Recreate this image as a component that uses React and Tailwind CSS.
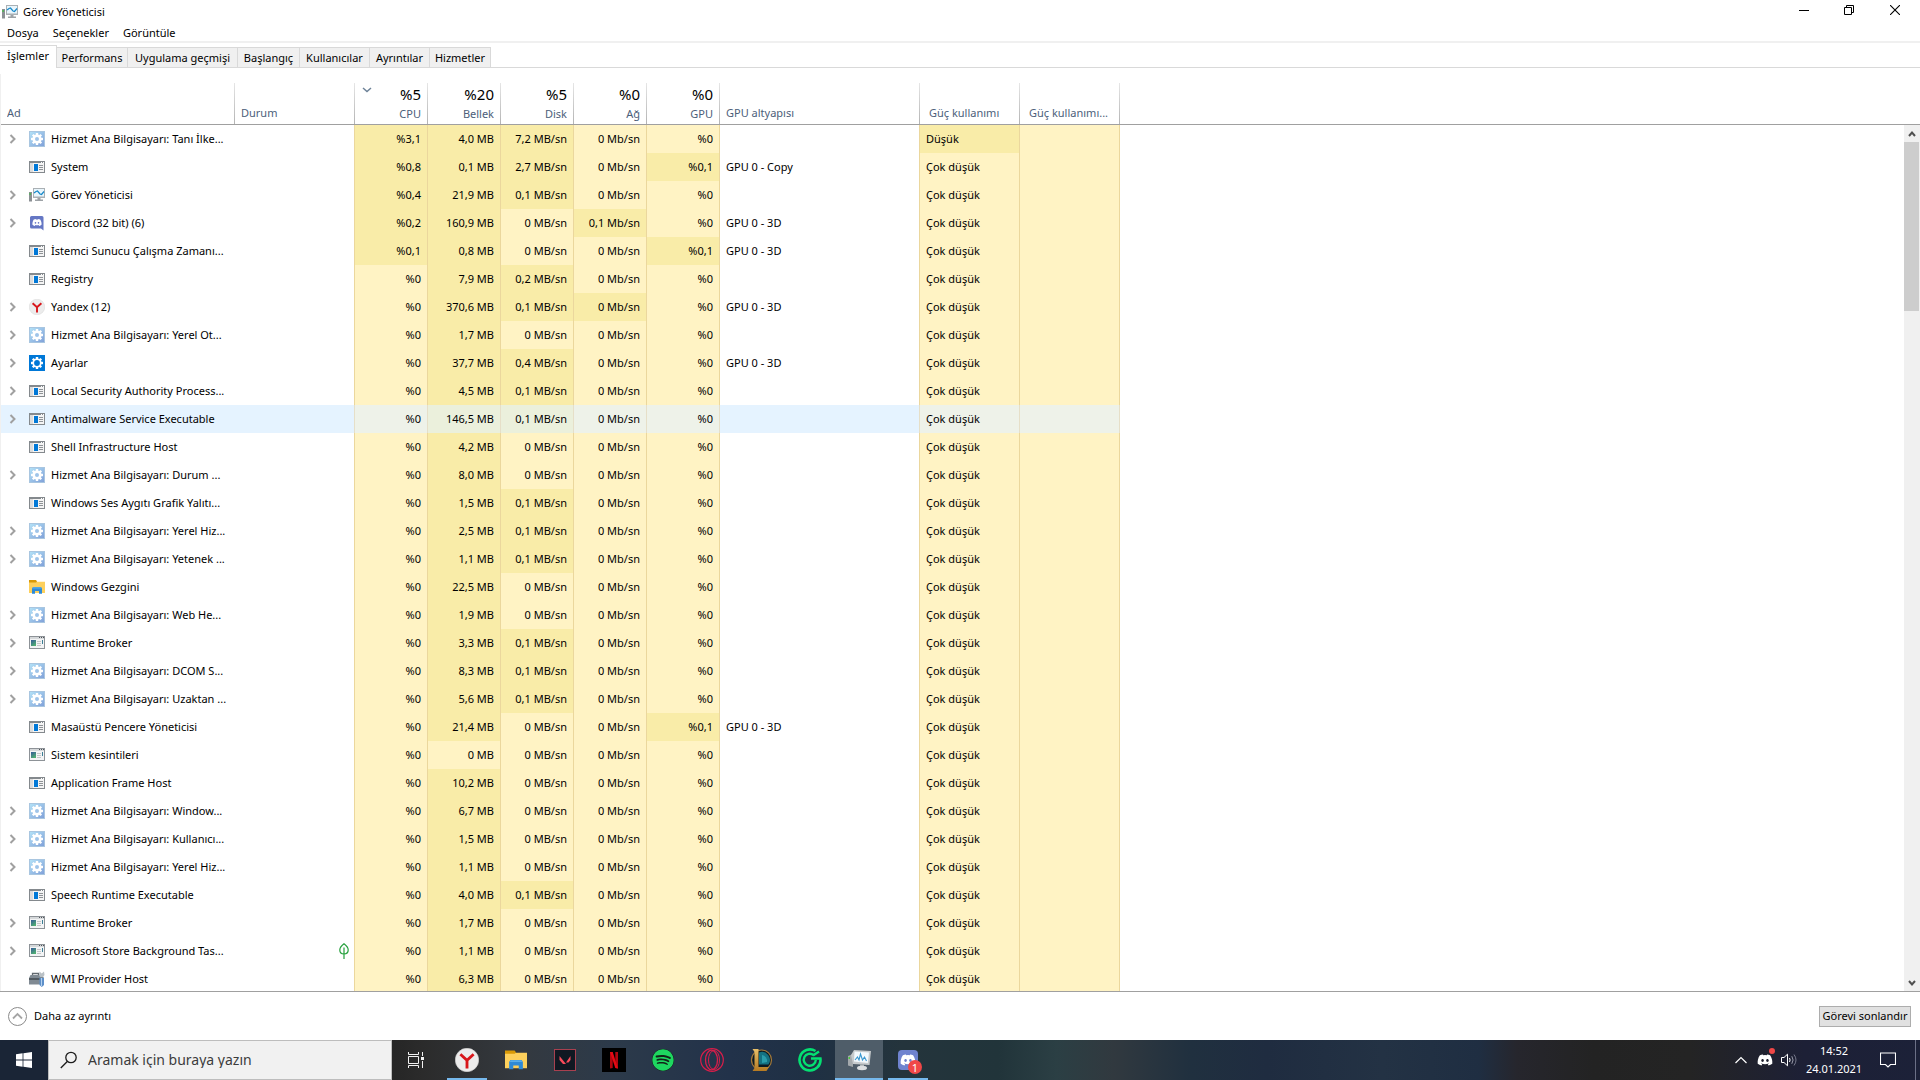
import React from "react";
import { FaDiscord, FaSpotify } from "react-icons/fa";

const TABS = [
  ["Performans", "w-[71px]"],
  ["Uygulama geçmişi", "w-[110px]"],
  ["Başlangıç", "w-[62px]"],
  ["Kullanıcılar", "w-[70px]"],
  ["Ayrıntılar", "w-[60px]"],
  ["Hizmetler", "w-[61px]"],
];

// expandable, icon, name, cpu, memory, disk, network, gpu, gpu engine
const ROWS = [
  [1, "gear", "Hizmet Ana Bilgisayarı: Tanı İlke...", "%3,1", "4,0 MB", "7,2 MB/sn", "0 Mb/sn", "%0", ""],
  [0, "exe", "System", "%0,8", "0,1 MB", "2,7 MB/sn", "0 Mb/sn", "%0,1", "GPU 0 - Copy"],
  [1, "monitor", "Görev Yöneticisi", "%0,4", "21,9 MB", "0,1 MB/sn", "0 Mb/sn", "%0", ""],
  [1, "discord", "Discord (32 bit) (6)", "%0,2", "160,9 MB", "0 MB/sn", "0,1 Mb/sn", "%0", "GPU 0 - 3D"],
  [0, "exe", "İstemci Sunucu Çalışma Zamanı...", "%0,1", "0,8 MB", "0 MB/sn", "0 Mb/sn", "%0,1", "GPU 0 - 3D"],
  [0, "exe", "Registry", "%0", "7,9 MB", "0,2 MB/sn", "0 Mb/sn", "%0", ""],
  [1, "yandex", "Yandex (12)", "%0", "370,6 MB", "0,1 MB/sn", "0 Mb/sn", "%0", "GPU 0 - 3D"],
  [1, "gear", "Hizmet Ana Bilgisayarı: Yerel Ot...", "%0", "1,7 MB", "0 MB/sn", "0 Mb/sn", "%0", ""],
  [1, "settings", "Ayarlar", "%0", "37,7 MB", "0,4 MB/sn", "0 Mb/sn", "%0", "GPU 0 - 3D"],
  [1, "exe", "Local Security Authority Process...", "%0", "4,5 MB", "0,1 MB/sn", "0 Mb/sn", "%0", ""],
  [1, "exe", "Antimalware Service Executable", "%0", "146,5 MB", "0,1 MB/sn", "0 Mb/sn", "%0", ""],
  [0, "exe", "Shell Infrastructure Host", "%0", "4,2 MB", "0 MB/sn", "0 Mb/sn", "%0", ""],
  [1, "gear", "Hizmet Ana Bilgisayarı: Durum ...", "%0", "8,0 MB", "0 MB/sn", "0 Mb/sn", "%0", ""],
  [0, "exe", "Windows Ses Aygıtı Grafik Yalıtı...", "%0", "1,5 MB", "0,1 MB/sn", "0 Mb/sn", "%0", ""],
  [1, "gear", "Hizmet Ana Bilgisayarı: Yerel Hiz...", "%0", "2,5 MB", "0,1 MB/sn", "0 Mb/sn", "%0", ""],
  [1, "gear", "Hizmet Ana Bilgisayarı: Yetenek ...", "%0", "1,1 MB", "0,1 MB/sn", "0 Mb/sn", "%0", ""],
  [0, "folder", "Windows Gezgini", "%0", "22,5 MB", "0 MB/sn", "0 Mb/sn", "%0", ""],
  [1, "gear", "Hizmet Ana Bilgisayarı: Web He...", "%0", "1,9 MB", "0 MB/sn", "0 Mb/sn", "%0", ""],
  [1, "app", "Runtime Broker", "%0", "3,3 MB", "0,1 MB/sn", "0 Mb/sn", "%0", ""],
  [1, "gear", "Hizmet Ana Bilgisayarı: DCOM S...", "%0", "8,3 MB", "0,1 MB/sn", "0 Mb/sn", "%0", ""],
  [1, "gear", "Hizmet Ana Bilgisayarı: Uzaktan ...", "%0", "5,6 MB", "0,1 MB/sn", "0 Mb/sn", "%0", ""],
  [0, "exe", "Masaüstü Pencere Yöneticisi", "%0", "21,4 MB", "0 MB/sn", "0 Mb/sn", "%0,1", "GPU 0 - 3D"],
  [0, "app", "Sistem kesintileri", "%0", "0 MB", "0 MB/sn", "0 Mb/sn", "%0", ""],
  [0, "exe", "Application Frame Host", "%0", "10,2 MB", "0 MB/sn", "0 Mb/sn", "%0", ""],
  [1, "gear", "Hizmet Ana Bilgisayarı: Window...", "%0", "6,7 MB", "0 MB/sn", "0 Mb/sn", "%0", ""],
  [1, "gear", "Hizmet Ana Bilgisayarı: Kullanıcı...", "%0", "1,5 MB", "0 MB/sn", "0 Mb/sn", "%0", ""],
  [1, "gear", "Hizmet Ana Bilgisayarı: Yerel Hiz...", "%0", "1,1 MB", "0 MB/sn", "0 Mb/sn", "%0", ""],
  [0, "exe", "Speech Runtime Executable", "%0", "4,0 MB", "0,1 MB/sn", "0 Mb/sn", "%0", ""],
  [1, "app", "Runtime Broker", "%0", "1,7 MB", "0 MB/sn", "0 Mb/sn", "%0", ""],
  [1, "app", "Microsoft Store Background Tas...", "%0", "1,1 MB", "0 MB/sn", "0 Mb/sn", "%0", ""],
  [0, "toolbox", "WMI Provider Host", "%0", "6,3 MB", "0 MB/sn", "0 Mb/sn", "%0", ""],
];

const HOVERED = 10;
const SUSPENDED = 29;

function GearShape({ fill, hole, inner }) {
  return (
    <g>
      <g fill={fill}>
        <rect x="6.8" y="2" width="2.4" height="12" />
        <rect x="6.8" y="2" width="2.4" height="12" transform="rotate(45 8 8)" />
        <rect x="6.8" y="2" width="2.4" height="12" transform="rotate(90 8 8)" />
        <rect x="6.8" y="2" width="2.4" height="12" transform="rotate(135 8 8)" />
        <circle cx="8" cy="8" r="4.6" />
      </g>
      <circle cx="8" cy="8" r={inner} fill={hole} />
    </g>
  );
}

function YandexLogo({ size }) {
  return (
    <svg className={size} viewBox="0 0 16 16" aria-hidden="true">
      <circle cx="8" cy="8" r="7.8" fill="#ececec" stroke="#d2d2d2" strokeWidth="0.4" />
      <path d="M3.6 4.2 8 8.2 12.4 4.2M8 8v5.6" fill="none" stroke="#d8161b" strokeWidth="1.9" />
    </svg>
  );
}

function Folder({ size }) {
  return (
    <svg className={size} viewBox="0 0 16 16" aria-hidden="true">
      <path d="M0 1h7l1 1.5V4H0z" fill="#d99a07" />
      <path d="M0 3.5h7L8 2.8h8V14H0z" fill="#fdd05c" />
      <path d="M3 14.8V9.5L4 8h8l1 1.5V14.8h-3V12H6v2.8z" fill="#2f8ad6" />
      <path d="M3.3 9.4 4.2 8.2h7.6l.9 1.2z" fill="#5aaeea" />
    </svg>
  );
}

function Monitor({ size }) {
  return (
    <svg className={size} viewBox="0 0 16 16" aria-hidden="true">
      <rect x="0" y="5" width="3" height="9.5" fill="#8b9094" />
      <rect x="0.5" y="6" width="1.2" height="2" fill="#3fc13f" />
      <path d="M4 1h12v10H4z" fill="#aab0b4" />
      <path d="M5 2h10v7.500H5z" fill="#e8f5fc" />
      <path d="M5 6 7 4.500 8.500 4 11 7l1.500.5L15 4.500" fill="none" stroke="#1588c9" strokeWidth="1.200" />
      <path d="M8.500 11h3v1.500H14V14H6v-1.500h2.500z" fill="#9da2a6" />
    </svg>
  );
}

function RowIcon({ kind }) {
  if (kind === "gear")
    return (
      <svg className="size-4" viewBox="0 0 16 16" aria-hidden="true">
        <defs>
          <linearGradient id="gearTile" x1="0" y1="0" x2="1" y2="1">
            <stop offset="0" stopColor="#b4e3f8" />
            <stop offset="1" stopColor="#7f9fd8" />
          </linearGradient>
        </defs>
        <rect x="0.5" y="0.5" width="15" height="15" fill="url(#gearTile)" stroke="#a9c6e0" />
        <GearShape fill="#fff" hole="#9fc4e9" inner="2" />
      </svg>
    );
  if (kind === "settings")
    return (
      <svg className="size-4" viewBox="0 0 16 16" aria-hidden="true">
        <rect width="16" height="16" fill="#0078d7" />
        <GearShape fill="#fff" hole="#0078d7" inner="2.9" />
      </svg>
    );
  if (kind === "exe")
    return (
      <svg className="size-4" viewBox="0 0 16 16" aria-hidden="true">
        <path d="M0 2h16v12H0z" fill="#84898d" />
        <path d="M1 4h14v9H1z" fill="#f4f4f4" />
        <path d="M1 4h3v9H1z" fill="#dcdcdc" />
        <path d="M5 5h4v7H5z" fill="#0078d7" />
        <path d="M10 6h4v1h-4zM10 8h4v1h-4zM10 10h4v1h-4z" fill="#8f9397" />
        <path d="M12 3h1v1h-1zM14 3h1v1h-1z" fill="#fff" />
      </svg>
    );
  if (kind === "app")
    return (
      <svg className="size-4" viewBox="0 0 16 16" aria-hidden="true">
        <defs>
          <linearGradient id="appPane" x1="0" y1="0" x2="0.6" y2="1">
            <stop offset="0" stopColor="#35599a" />
            <stop offset="1" stopColor="#4fae72" />
          </linearGradient>
        </defs>
        <path d="M0 1h16v13H0z" fill="#8d9297" />
        <path d="M1 2h14v2H1z" fill="#d5d8da" />
        <path d="M1 4h14v9H1z" fill="#f3f4f5" />
        <path d="M10 2h1v1h-1zM12 2h1v1h-1zM14 2h1v1h-1z" fill="#50555a" />
        <path d="M2 5h5v6H2z" fill="url(#appPane)" />
        <path d="M8 6h4v1H8zM8 8h4v1H8zM8 10h4v1H8z" fill="#c3c6c8" />
        <path d="M13 5h1v4h-1z" fill="#3c7f96" />
      </svg>
    );
  if (kind === "monitor") return <Monitor size="size-4" />;
  if (kind === "yandex") return <YandexLogo size="size-4" />;
  if (kind === "folder") return <Folder size="size-4" />;
  if (kind === "discord")
    return (
      <svg className="size-4" viewBox="0 0 16 16" aria-hidden="true">
        <path d="M2.5 1h10.5A1.5 1.5 0 0 1 14.5 2.500V15.500L12 13.500H2.500A1.500 1.500 0 0 1 1 12V2.500A1.500 1.500 0 0 1 2.500 1z" fill="#6577c4" />
        <FaDiscord x="3" y="2.500" size="10" color="#fff" />
      </svg>
    );
  return (
    <svg className="size-4" viewBox="0 0 16 16" aria-hidden="true">
      <path d="M3.500 4V2.500h6V4" fill="none" stroke="#62696f" strokeWidth="1.300" />
      <path d="M1.500 4h11.500l2 3v6.500H0V7z" fill="#808a93" />
      <path d="M0 7h15v2H0z" fill="#525a61" />
      <path d="M10.500 .5 12.700 2.500 15 .5 15.500 4 14 6h-3L10 4z" fill="#b9c0c5" />
      <path d="M10.500 7H15v7l-2.200 2-2.300-2z" fill="#5d8fc9" />
      <path d="M12 7h1v8h-1z" fill="#b4d1ee" />
    </svg>
  );
}

function cellTone(value, hovered) {
  const zero = /^%?0( MB| MB\/sn| Mb\/sn)?$/.test(value);
  if (hovered) return zero ? "bg-[#eef2e9]" : "bg-[#ebf0dc]";
  return zero ? "bg-[#fff3c4]" : "bg-[#f9eca8]";
}

function HeaderCell({ big, label, align = "text-right", pad = "px-1.5", sort, last }) {
  return (
    <th scope="col" className="h-[51px] border-b border-[#a0a0a0] p-0 font-normal">
      <div className="flex h-full flex-col justify-end pt-2">
        <div className="flex h-[41px]">
          <div className={`relative flex min-w-0 flex-1 flex-col justify-end pb-0.5 ${align} ${pad}`}>
            {sort && (
              <svg className="absolute top-[3px] left-1.5 h-2 w-3" viewBox="0 0 12 8" aria-hidden="true">
                <path d="M2 2l4 3.500L10 2" fill="none" stroke="#6d8298" strokeWidth="1.500" />
              </svg>
            )}
            {big && <span className="text-[15px] leading-[22px] text-black">{big}</span>}
            <span className="truncate text-[11px] leading-[18px] text-[#4c607a]">{label}</span>
          </div>
          {!last && <div className="w-px bg-linear-to-b from-[#e6e6e6] to-[#b4b4b4]" />}
        </div>
      </div>
    </th>
  );
}

function ProcessTable() {
  return (
    <table className="w-full table-fixed border-separate border-spacing-0 text-[11px] leading-4 text-black">
      <colgroup>
        <col className="w-[234px]" />
        <col className="w-[120px]" />
        <col className="w-[73px]" />
        <col className="w-[73px]" />
        <col className="w-[73px]" />
        <col className="w-[73px]" />
        <col className="w-[73px]" />
        <col className="w-[200px]" />
        <col className="w-[100px]" />
        <col className="w-[100px]" />
        <col />
      </colgroup>
      <thead>
        <tr>
          <HeaderCell label="Ad" align="text-left" />
          <HeaderCell label="Durum" align="text-left" />
          <HeaderCell big="%5" label="CPU" sort />
          <HeaderCell big="%20" label="Bellek" />
          <HeaderCell big="%5" label="Disk" />
          <HeaderCell big="%0" label="Ağ" />
          <HeaderCell big="%0" label="GPU" />
          <HeaderCell label="GPU altyapısı" align="text-left" />
          <HeaderCell label="Güç kullanımı" align="text-left" pad="pl-[9px] pr-1" />
          <HeaderCell label="Güç kullanımı..." align="text-left" pad="pl-[9px] pr-1" />
          <HeaderCell label="" last />
        </tr>
      </thead>
      <tbody>
        {ROWS.map(([expandable, icon, name, cpu, mem, disk, net, gpu, engine], i) => {
          const hov = i === HOVERED;
          const plain = hov ? "bg-[#e5f3ff]" : "";
          const line = hov ? "border-[#e6dfc8]" : "border-[#ebd79d]";
          const power = i === 0 ? "bg-[#f9eca8]" : hov ? "bg-[#eef2e9]" : "bg-[#fff3c4]";
          return (
            <tr key={i}>
              <td className={`h-7 p-0 ${plain}`}>
                <div className="flex items-center whitespace-nowrap">
                  <div className="flex w-7 justify-start pl-1.5">
                    {expandable ? (
                      <button type="button" aria-label={`${name} genişlet`} className="flex size-3 items-center justify-center">
                        <svg className="h-3 w-2" viewBox="0 0 8 12" aria-hidden="true">
                          <path d="M1.5 2l4 4-4 4" fill="none" stroke="#a0a0a0" strokeWidth="2" />
                        </svg>
                      </button>
                    ) : null}
                  </div>
                  <RowIcon kind={icon} />
                  <span className="pl-1.5">{name}</span>
                </div>
              </td>
              <td className={`border-r p-0 ${line} ${plain}`}>
                {i === SUSPENDED && (
                  <div className="flex justify-end pr-[5px]">
                    <svg className="h-4 w-2.5" viewBox="0 0 10 16" role="img" aria-label="Askıya alındı">
                      <path d="M5 .8C2 3 .8 4.500.8 7c0 2.500 2 4 4.200 4s4.200-1.500 4.200-4C9.200 4.500 8 3 5 .8zM5 4.500v11.500" fill="none" stroke="#25a03c" strokeWidth="1.200" />
                    </svg>
                  </div>
                )}
              </td>
              {[cpu, mem, disk, net, gpu].map((v, k) => (
                <td key={k} className={`border-r p-0 pr-1.5 text-right whitespace-nowrap ${line} ${cellTone(k === 3 && i === 6 ? "busy" : v, hov)}`}>
                  {v}
                </td>
              ))}
              <td className={`border-r p-0 pl-1.5 ${line} ${plain}`}>{engine}</td>
              <td className={`border-r p-0 pl-1.5 ${line} ${power}`}>{i === 0 ? "Düşük" : "Çok düşük"}</td>
              <td className={`border-r p-0 ${line} ${hov ? "bg-[#eef2e9]" : "bg-[#fff3c4]"}`} />
              <td className="p-0" />
            </tr>
          );
        })}
      </tbody>
    </table>
  );
}

function ScrollBar() {
  return (
    <div className="flex w-4 flex-col">
      <div className="h-[51px] border-b border-[#a0a0a0]" />
      <div className="flex flex-1 flex-col bg-[#f0f0f0] pr-px">
        <button type="button" aria-label="Yukarı kaydır" className="flex h-[17px] items-center justify-center">
          <svg className="h-2 w-2" viewBox="0 0 8 8" aria-hidden="true">
            <path d="M1 6l3-3.500L7 6" fill="none" stroke="#505050" strokeWidth="2" />
          </svg>
        </button>
        <div className="h-[169px] bg-[#cdcdcd]" />
        <div className="flex-1" />
        <button type="button" aria-label="Aşağı kaydır" className="flex h-[17px] items-center justify-center">
          <svg className="h-2 w-2" viewBox="0 0 8 8" aria-hidden="true">
            <path d="M1 2l3 3.500L7 2" fill="none" stroke="#505050" strokeWidth="2" />
          </svg>
        </button>
      </div>
    </div>
  );
}

function TaskButton({ label, running, active, children }) {
  return (
    <button
      type="button"
      aria-label={label}
      className={`relative flex h-10 w-12 items-center justify-center ${active ? "bg-[#4f5d69]" : ""}`}
    >
      {children}
      {running && <span className={`absolute bottom-0 h-0.5 bg-[#76b9ed] ${active ? "inset-x-0" : "inset-x-1"}`} />}
    </button>
  );
}

function Taskbar() {
  return (
    <footer className="flex h-10 shrink-0 items-stretch bg-[linear-gradient(to_right,#1a2536_0%,#1a2536_3%,#242424_20%,#2b2b2b_22%,#34393f_27%,#2c3a4a_32%,#22324a_38%,#1f3044_42%,#24343c_47%,#21343a_52%,#2b3f44_55%,#31393f_58%,#20303f_62%,#1f2c40_66%,#233244_72%,#1f2e42_77%,#26262d_79%,#232323_83%,#242424_88%,#1d2036_94%,#1c2138_100%)]">
      <button type="button" aria-label="Başlat" className="flex w-12 items-center justify-center">
        <svg className="size-4" viewBox="0 0 16 16" aria-hidden="true">
          <path d="M0 2.200 6.600 1.300v6.300H0zM7.400 1.200 16 0v7.600H7.400zM0 8.400h6.600v6.300L0 13.800zM7.400 8.400H16V16l-8.600-1.200z" fill="#fff" />
        </svg>
      </button>
      <label className="flex w-[344px] items-center border border-[#bdbdbd] bg-[#f1f1f1] pl-[11px]">
        <svg className="size-[18px] shrink-0" viewBox="0 0 18 18" aria-hidden="true">
          <circle cx="11" cy="6.500" r="5.200" fill="none" stroke="#1c1c1c" strokeWidth="1.300" />
          <path d="M7.300 10.500.8 17" stroke="#1c1c1c" strokeWidth="1.300" />
        </svg>
        <input
          type="text"
          aria-label="Arama"
          placeholder="Aramak için buraya yazın"
          className="ml-[10px] w-full bg-transparent text-[14px] text-[#3c3c3c] outline-none placeholder:text-[#3c3c3c]"
        />
      </label>
      <div className="flex gap-px">
        <div className="mr-0.5">
          <TaskButton label="Görev görünümü">
            <svg className="size-4" viewBox="0 0 16 16" aria-hidden="true">
              <path d="M.5 0v2.500h10V0M.5 16v-2.500h10V16M.5 4.500h10v7H.5zM14.500 0v4M14.500 9v7" fill="none" stroke="#f2f2f2" />
              <rect x="13" y="5" width="3" height="3" fill="#f2f2f2" />
            </svg>
          </TaskButton>
        </div>
        <TaskButton label="Yandex" running>
          <YandexLogo size="size-6" />
        </TaskButton>
        <TaskButton label="Dosya Gezgini">
          <Folder size="size-[22px]" />
        </TaskButton>
        <TaskButton label="Valorant">
          <svg className="size-[22px]" viewBox="0 0 22 22" aria-hidden="true">
            <rect x="0.5" y="0.5" width="21" height="21" fill="#101822" stroke="#a8404f" />
            <path d="M5.500 7l6.500 8H9L5.500 11zM16.500 7v4l-2 2.500H12z" fill="#f74b5a" />
          </svg>
        </TaskButton>
        <TaskButton label="Netflix">
          <svg className="size-6" viewBox="0 0 24 24" aria-hidden="true">
            <rect width="24" height="24" fill="#000" />
            <path d="M8 4h2.700v16L8 20.400zM13.300 4H16v16.400l-2.700-.4z" fill="#b1060f" />
            <path d="M8 4h2.700L16 20.400l-2.700-.4z" fill="#e50914" />
          </svg>
        </TaskButton>
        <TaskButton label="Spotify">
          <FaSpotify className="size-[22px] rounded-full bg-[#122318] text-[#1ed760]" aria-hidden="true" />
        </TaskButton>
        <TaskButton label="Opera GX">
          <svg className="size-6" viewBox="0 0 24 24" fill="none" stroke="#d81e4a" aria-hidden="true">
            <circle cx="12" cy="12" r="11.3" strokeWidth="1.2" />
            <ellipse cx="11.5" cy="12" rx="6" ry="9.8" strokeWidth="1.3" />
            <ellipse cx="14" cy="12" rx="5.5" ry="9.5" strokeWidth="1" />
          </svg>
        </TaskButton>
        <TaskButton label="League of Legends">
          <svg className="size-6" viewBox="0 0 24 24" aria-hidden="true">
            <defs>
              <linearGradient id="lolGold" x1="0" y1="0" x2="0" y2="1">
                <stop offset="0" stopColor="#e8c069" />
                <stop offset="1" stopColor="#b57a22" />
              </linearGradient>
            </defs>
            <circle cx="12.5" cy="12" r="10" fill="#0c1a22" stroke="#a3793a" strokeWidth="1.2" />
            <path d="M10 4.500a8 8 0 0 1 9.500 12H10z" fill="#147181" />
            <path d="M13 7a6 6 0 0 1 5 7l-5 1z" fill="#2a9dab" />
            <path d="M3.500 1h6v18H20l-2.500 4h-14L5.500 20V4z" fill="url(#lolGold)" />
          </svg>
        </TaskButton>
        <TaskButton label="Glyph G">
          <svg className="size-6" viewBox="0 0 24 24" fill="none" stroke="#04e072" aria-hidden="true">
            <path d="M17.500 3A10.500 10.500 0 1 0 22.400 10.500H13" strokeWidth="2.600" />
            <path d="M15.500 7A6 6 0 1 0 17.800 12" strokeWidth="2.400" />
            <path d="M15 7.500 21 3.500" strokeWidth="2.200" />
          </svg>
        </TaskButton>
        <TaskButton label="Görev Yöneticisi" running active>
          <svg className="size-6" viewBox="0 0 24 24" aria-hidden="true">
            <path d="M1 8l5-2v13l-5-1.500z" fill="#a4a9ac" />
            <path d="M1.500 9h1.500v2H1.500z" fill="#49c93b" />
            <path d="M4 7l3-5 17 1-1.500 14L6 16z" fill="#c6cacc" />
            <path d="M7.500 3.500l14.500 1-1.200 10.500L7 13.500z" fill="#f3f9fd" />
            <path d="M8 12l2.500-3 1.500 3 1.500-6 2 6 2-3 2 4" fill="none" stroke="#3a97cf" strokeWidth="1.100" />
            <path d="M13 16.500h4V19h-4z" fill="#b4b8bb" />
            <ellipse cx="15" cy="20" rx="5" ry="2.200" fill="#dcdfe1" />
          </svg>
        </TaskButton>
        <TaskButton label="Discord" running>
          <span className="relative flex size-5 items-center justify-center rounded-sm bg-[#6f83cf]">
            <FaDiscord className="size-4 text-white" aria-hidden="true" />
            <span className="absolute top-2.5 left-2.5 flex size-3.5 items-center justify-center rounded-full bg-[#f04747] text-[11px] leading-none text-white">
              1
            </span>
          </span>
        </TaskButton>
      </div>
      <div className="ml-auto flex items-center text-white">
        <button type="button" aria-label="Gizli simgeleri göster" className="flex w-6 justify-center">
          <svg className="h-2 w-3" viewBox="0 0 12 8" aria-hidden="true">
            <path d="M.5 7 6 1.500 11.500 7" fill="none" stroke="#fff" strokeWidth="1.200" />
          </svg>
        </button>
        <button type="button" aria-label="Discord" className="relative flex w-6 justify-center">
          <FaDiscord className="size-4" aria-hidden="true" />
          <span className="absolute -top-1 right-0.5 size-1.5 rounded-full bg-[#f04747]" />
        </button>
        <button type="button" aria-label="Ses" className="flex w-6 justify-center">
          <svg className="size-4" viewBox="0 0 16 16" fill="none" stroke="#fff" aria-hidden="true">
            <path d="M.5 5.500h2.500l3.500-3.300v11.600L3 10.500H.5z" />
            <path d="M8.500 6q1.200 2 0 4" />
            <path d="M10.800 4.200q2.600 3.800 0 7.600" stroke="#9a9cab" />
            <path d="M13 2.500q4 5.500 0 11" stroke="#777a8c" />
          </svg>
        </button>
        <div className="flex w-[66px] flex-col items-center text-[11px] leading-[18px]">
          <time>14:52</time>
          <time>24.01.2021</time>
        </div>
        <button type="button" aria-label="Bildirimler" className="flex w-[42px] justify-center">
          <svg className="size-4" viewBox="0 0 16 16" aria-hidden="true">
            <path d="M.5 1h15v11.500h-5L8 15l-2.500-2.500h-5z" fill="none" stroke="#fff" strokeWidth="1.100" />
          </svg>
        </button>
        <div className="mr-1 ml-1.5 h-10 w-px bg-[#6b7086]" />
      </div>
    </footer>
  );
}

export default function App() {
  return (
    <div className="flex h-screen flex-col overflow-hidden bg-white font-['Noto_Sans','Open_Sans',sans-serif] text-[11px] leading-4 text-black">
      <header className="flex h-[23px] shrink-0 items-start justify-between">
        <h1 className="flex items-center gap-[5px] pt-1 pl-0.5">
          <Monitor size="size-4" />
          Görev Yöneticisi
        </h1>
        <div className="flex h-5 items-center">
          <button type="button" aria-label="Simge durumuna küçült" className="flex w-[46px] justify-center">
            <svg className="size-2.5" viewBox="0 0 10 10" aria-hidden="true">
              <path d="M0 5.500h10" stroke="#000" />
            </svg>
          </button>
          <button type="button" aria-label="Önceki boyut" className="flex w-11 justify-center">
            <svg className="size-2.5" viewBox="0 0 10 10" aria-hidden="true">
              <path d="M.5 2.500h7v7h-7zM2.500 2.500v-2h7v7h-2" fill="none" stroke="#000" />
            </svg>
          </button>
          <button type="button" aria-label="Kapat" className="mr-px flex w-12 justify-center">
            <svg className="size-2.5" viewBox="0 0 10 10" aria-hidden="true">
              <path d="M0 0l10 10M10 0L0 10" stroke="#000" strokeWidth="1.100" />
            </svg>
          </button>
        </div>
      </header>
      <nav className="flex h-5 shrink-0 items-end gap-[14px] border-b-2 border-[#f0f0f0] pl-[7px]">
        <button type="button">Dosya</button>
        <button type="button">Seçenekler</button>
        <button type="button">Görüntüle</button>
      </nav>
      <div role="tablist" className="flex h-[25px] shrink-0 items-end shadow-[inset_0_-1px_0_#d9d9d9]">
        <button
          type="button"
          role="tab"
          aria-selected="true"
          className="flex h-[23px] w-[57px] items-start justify-center border-t border-r border-[#d9d9d9] bg-white pt-0.5"
        >
          İşlemler
        </button>
        {TABS.map(([label, width]) => (
          <button
            key={label}
            type="button"
            role="tab"
            aria-selected="false"
            className={`flex h-[21px] items-center justify-center border-y border-r border-[#d9d9d9] bg-[#f0f0f0] whitespace-nowrap ${width}`}
          >
            {label}
          </button>
        ))}
      </div>
      <main className="mt-[6px] flex min-h-0 flex-1 border-l border-[#f0f0f0]">
        <div className="min-w-0 flex-1 overflow-hidden">
          <ProcessTable />
        </div>
        <ScrollBar />
      </main>
      <section className="flex h-[49px] shrink-0 items-center justify-between border-t border-[#a0a0a0] pr-[9px] pl-2">
        <button type="button" className="flex items-center gap-[7px]">
          <svg className="size-[19px]" viewBox="0 0 19 19" fill="none" aria-hidden="true">
            <circle cx="9.5" cy="9.5" r="9" stroke="#8a8a8a" />
            <path d="M5 11.500 9.500 7l4.500 4.500" stroke="#a5a5a5" strokeWidth="1.800" />
          </svg>
          Daha az ayrıntı
        </button>
        <button type="button" className="h-[21px] w-[92px] border border-[#adadad] bg-[#e1e1e1] whitespace-nowrap">
          Görevi sonlandır
        </button>
      </section>
      <Taskbar />
    </div>
  );
}
